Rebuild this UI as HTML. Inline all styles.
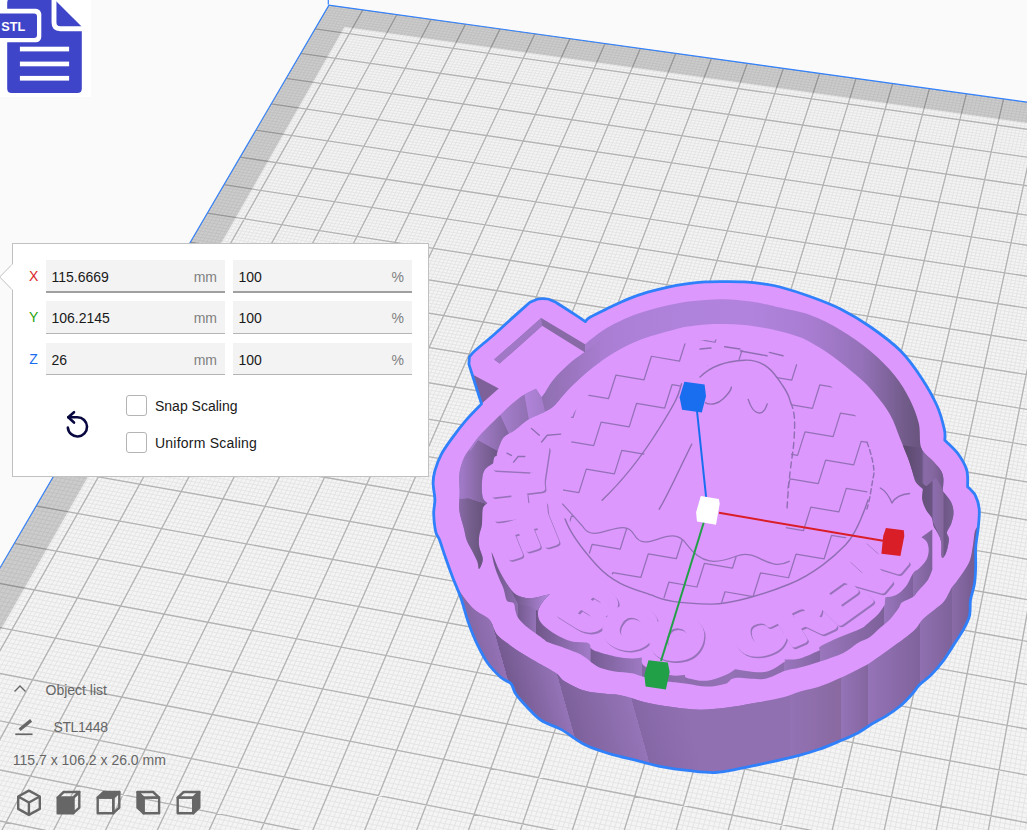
<!DOCTYPE html>
<html lang="en"><head><meta charset="utf-8"><title>Scale tool</title>
<style>
html,body{margin:0;padding:0}
body{width:1027px;height:830px;overflow:hidden;background:#fafafa;position:relative;font-family:"Liberation Sans",sans-serif;font-size:14px;color:#191919}
.scene{position:absolute;left:0;top:0;display:block}
.abs{position:absolute}
.stl{left:0;top:0;width:91px;height:97px;background:#fff;overflow:hidden}
.panel{left:12px;top:243px;width:417px;height:234px;box-sizing:border-box;background:#fff;border:1px solid #c0c1c2}
.arrow{left:0;top:263px}
.fld{height:31px;width:179px;background:#f3f3f3;border-bottom:1px solid #b4b4b4;box-sizing:content-box}
.fld span{position:absolute;top:0.5px;line-height:32px}
.fld.hov span{top:0.5px}
.fld .v{left:5.5px;color:#191919}
.fld .u{right:8px;color:#808080}
.fld.hov{height:31px;border-bottom:2px solid #a0a0a0}
.lbl{line-height:33px;left:29px;width:9px;text-align:center}
.cb{width:19px;height:19px;border:1px solid #b4b4b4;border-radius:3px;background:#fff;left:126px}
.cbl{left:155px;line-height:21px;color:#191919}
.ol{color:#666}

</style></head>
<body>
<svg class="scene" width="1027" height="830" viewBox="0 0 1027 830">
<defs><clipPath id="pc"><polygon points="328.9,5.1 1308.4,141.3 1207.0,1312.8 -247.1,990.5"/></clipPath></defs>
<polygon points="328.9,5.1 1308.4,141.3 1207.0,1312.8 -247.1,990.5" fill="#f4f4f4"/>
<g clip-path="url(#pc)">
<path d="M332.3 5.5L-242.2 991.6M335.7 6.0L-237.4 992.7M339.0 6.5L-232.6 993.8M342.4 6.9L-227.7 994.8M345.8 7.4L-222.8 995.9M349.2 7.9L-218.0 997.0M352.6 8.4L-213.1 998.1M356.0 8.8L-208.2 999.1M359.4 9.3L-203.4 1000.2M366.2 10.2L-193.6 1002.4M369.6 10.7L-188.7 1003.5M373.0 11.2L-183.9 1004.6M376.4 11.7L-179.0 1005.6M379.8 12.1L-174.1 1006.7M383.2 12.6L-169.2 1007.8M386.6 13.1L-164.3 1008.9M390.0 13.6L-159.4 1010.0M393.5 14.0L-154.5 1011.1M400.3 15.0L-144.6 1013.2M403.7 15.5L-139.7 1014.3M407.1 15.9L-134.8 1015.4M410.5 16.4L-129.9 1016.5M414.0 16.9L-124.9 1017.6M417.4 17.4L-120.0 1018.7M420.8 17.8L-115.1 1019.8M424.3 18.3L-110.1 1020.9M427.7 18.8L-105.2 1022.0M434.6 19.8L-95.3 1024.2M438.0 20.2L-90.3 1025.3M441.4 20.7L-85.3 1026.4M444.9 21.2L-80.4 1027.5M448.3 21.7L-75.4 1028.6M451.8 22.1L-70.4 1029.7M455.2 22.6L-65.5 1030.8M458.6 23.1L-60.5 1031.9M462.1 23.6L-55.5 1033.0M469.0 24.5L-45.5 1035.2M472.4 25.0L-40.5 1036.3M475.9 25.5L-35.5 1037.4M479.4 26.0L-30.5 1038.5M482.8 26.5L-25.5 1039.6M486.3 27.0L-20.5 1040.8M489.7 27.4L-15.5 1041.9M493.2 27.9L-10.5 1043.0M496.7 28.4L-5.5 1044.1M503.6 29.4L4.6 1046.3M507.1 29.8L9.6 1047.4M510.6 30.3L14.7 1048.6M514.0 30.8L19.7 1049.7M517.5 31.3L24.8 1050.8M521.0 31.8L29.8 1051.9M524.5 32.3L34.9 1053.0M527.9 32.7L39.9 1054.1M531.4 33.2L45.0 1055.3M538.4 34.2L55.1 1057.5M541.9 34.7L60.2 1058.6M545.4 35.2L65.2 1059.8M548.9 35.7L70.3 1060.9M552.4 36.1L75.4 1062.0M555.9 36.6L80.5 1063.1M559.4 37.1L85.6 1064.3M562.9 37.6L90.7 1065.4M566.4 38.1L95.8 1066.5M573.4 39.1L106.0 1068.8M576.9 39.6L111.1 1069.9M580.4 40.0L116.2 1071.1M583.9 40.5L121.3 1072.2M587.4 41.0L126.5 1073.3M590.9 41.5L131.6 1074.5M594.4 42.0L136.7 1075.6M598.0 42.5L141.9 1076.7M601.5 43.0L147.0 1077.9M608.5 44.0L157.3 1080.2M612.0 44.4L162.4 1081.3M615.6 44.9L167.6 1082.4M619.1 45.4L172.7 1083.6M622.6 45.9L177.9 1084.7M626.2 46.4L183.1 1085.9M629.7 46.9L188.2 1087.0M633.2 47.4L193.4 1088.2M636.8 47.9L198.6 1089.3M643.8 48.9L209.0 1091.6M647.4 49.4L214.2 1092.8M650.9 49.9L219.4 1093.9M654.5 50.4L224.6 1095.1M658.0 50.8L229.8 1096.2M661.6 51.3L235.0 1097.4M665.1 51.8L240.2 1098.5M668.7 52.3L245.4 1099.7M672.2 52.8L250.6 1100.8M679.4 53.8L261.1 1103.2M682.9 54.3L266.3 1104.3M686.5 54.8L271.5 1105.5M690.0 55.3L276.8 1106.6M693.6 55.8L282.0 1107.8M697.2 56.3L287.3 1109.0M700.7 56.8L292.5 1110.1M704.3 57.3L297.8 1111.3M707.9 57.8L303.0 1112.5M715.0 58.8L313.6 1114.8M718.6 59.3L318.8 1116.0M722.2 59.8L324.1 1117.1M725.8 60.3L329.4 1118.3M729.4 60.8L334.7 1119.5M733.0 61.3L340.0 1120.6M736.6 61.8L345.2 1121.8M740.1 62.3L350.5 1123.0M743.7 62.8L355.8 1124.2M750.9 63.8L366.5 1126.5M754.5 64.3L371.8 1127.7M758.1 64.8L377.1 1128.9M761.7 65.3L382.4 1130.1M765.3 65.8L387.7 1131.2M768.9 66.3L393.1 1132.4M772.5 66.8L398.4 1133.6M776.2 67.3L403.7 1134.8M779.8 67.8L409.1 1136.0M787.0 68.8L419.8 1138.3M790.6 69.3L425.1 1139.5M794.2 69.8L430.5 1140.7M797.8 70.3L435.9 1141.9M801.5 70.8L441.2 1143.1M805.1 71.3L446.6 1144.3M808.7 71.8L452.0 1145.5M812.3 72.3L457.4 1146.7M816.0 72.8L462.7 1147.9M823.2 73.8L473.5 1150.2M826.9 74.3L478.9 1151.4M830.5 74.8L484.3 1152.6M834.2 75.3L489.7 1153.8M837.8 75.9L495.1 1155.0M841.4 76.4L500.6 1156.2M845.1 76.9L506.0 1157.4M848.7 77.4L511.4 1158.6M852.4 77.9L516.8 1159.8M859.7 78.9L527.7 1162.3M863.3 79.4L533.1 1163.5M867.0 79.9L538.6 1164.7M870.6 80.4L544.0 1165.9M874.3 80.9L549.5 1167.1M878.0 81.4L555.0 1168.3M881.6 82.0L560.4 1169.5M885.3 82.5L565.9 1170.7M889.0 83.0L571.4 1171.9M896.3 84.0L582.3 1174.4M900.0 84.5L587.8 1175.6M903.7 85.0L593.3 1176.8M907.3 85.5L598.8 1178.0M911.0 86.0L604.3 1179.2M914.7 86.6L609.8 1180.4M918.4 87.1L615.3 1181.7M922.1 87.6L620.8 1182.9M925.8 88.1L626.3 1184.1M933.1 89.1L637.4 1186.6M936.8 89.6L642.9 1187.8M940.5 90.1L648.4 1189.0M944.2 90.7L654.0 1190.2M947.9 91.2L659.5 1191.5M951.6 91.7L665.0 1192.7M955.3 92.2L670.6 1193.9M959.0 92.7L676.1 1195.2M962.7 93.2L681.7 1196.4M970.1 94.3L692.8 1198.9M973.9 94.8L698.4 1200.1M977.6 95.3L704.0 1201.3M981.3 95.8L709.6 1202.6M985.0 96.3L715.2 1203.8M988.7 96.9L720.7 1205.0M992.5 97.4L726.3 1206.3M996.2 97.9L731.9 1207.5M999.9 98.4L737.5 1208.8M1007.4 99.4L748.8 1211.2M1011.1 100.0L754.4 1212.5M1014.8 100.5L760.0 1213.7M1018.6 101.0L765.6 1215.0M1022.3 101.5L771.3 1216.2M1026.0 102.0L776.9 1217.5M1029.8 102.6L782.5 1218.7M1033.5 103.1L788.2 1220.0M1037.3 103.6L793.8 1221.2M1044.8 104.6L805.2 1223.7M1048.5 105.2L810.8 1225.0M1052.3 105.7L816.5 1226.3M1056.0 106.2L822.2 1227.5M1059.8 106.7L827.8 1228.8M1063.5 107.3L833.5 1230.0M1067.3 107.8L839.2 1231.3M1071.1 108.3L844.9 1232.6M1074.8 108.8L850.6 1233.8M1082.4 109.9L862.0 1236.3M1086.1 110.4L867.7 1237.6M1089.9 110.9L873.4 1238.9M1093.7 111.5L879.2 1240.1M1097.5 112.0L884.9 1241.4M1101.2 112.5L890.6 1242.7M1105.0 113.0L896.3 1244.0M1108.8 113.6L902.1 1245.2M1112.6 114.1L907.8 1246.5M1120.2 115.1L919.3 1249.0M1124.0 115.7L925.1 1250.3M1127.8 116.2L930.8 1251.6M1131.6 116.7L936.6 1252.9M1135.4 117.2L942.4 1254.2M1139.2 117.8L948.1 1255.4M1143.0 118.3L953.9 1256.7M1146.8 118.8L959.7 1258.0M1150.6 119.4L965.5 1259.3M1158.2 120.4L977.1 1261.9M1162.0 121.0L982.9 1263.1M1165.8 121.5L988.7 1264.4M1169.6 122.0L994.5 1265.7M1173.4 122.5L1000.3 1267.0M1177.3 123.1L1006.2 1268.3M1181.1 123.6L1012.0 1269.6M1184.9 124.1L1017.8 1270.9M1188.7 124.7L1023.7 1272.2M1196.4 125.7L1035.4 1274.8M1200.2 126.3L1041.2 1276.1M1204.1 126.8L1047.1 1277.4M1207.9 127.3L1052.9 1278.7M1211.7 127.9L1058.8 1280.0M1215.6 128.4L1064.7 1281.3M1219.4 128.9L1070.5 1282.6M1223.3 129.5L1076.4 1283.9M1227.1 130.0L1082.3 1285.2M1234.8 131.1L1094.1 1287.8M1238.7 131.6L1100.0 1289.1M1242.5 132.2L1105.9 1290.4M1246.4 132.7L1111.8 1291.7M1250.2 133.2L1117.7 1293.0M1254.1 133.8L1123.6 1294.3M1258.0 134.3L1129.6 1295.6M1261.8 134.8L1135.5 1297.0M1265.7 135.4L1141.4 1298.3M1273.4 136.5L1153.3 1300.9M1277.3 137.0L1159.3 1302.2M1281.2 137.5L1165.2 1303.5M1285.1 138.1L1171.2 1304.9M1288.9 138.6L1177.2 1306.2M1292.8 139.2L1183.1 1307.5M1296.7 139.7L1189.1 1308.8M1300.6 140.2L1195.1 1310.2M1304.5 140.8L1201.1 1311.5M327.5 7.4L1308.1 144.0M326.1 9.8L1307.9 146.7M324.7 12.1L1307.7 149.4M323.4 14.5L1307.4 152.2M322.0 16.9L1307.2 154.9M320.6 19.3L1306.9 157.6M319.2 21.7L1306.7 160.4M317.8 24.1L1306.5 163.1M316.4 26.5L1306.2 165.9M313.6 31.3L1305.8 171.4M312.1 33.7L1305.5 174.2M310.7 36.1L1305.3 177.0M309.3 38.6L1305.0 179.8M307.9 41.0L1304.8 182.6M306.4 43.4L1304.5 185.4M305.0 45.9L1304.3 188.2M303.6 48.3L1304.1 191.0M302.1 50.8L1303.8 193.8M299.3 55.7L1303.3 199.5M297.8 58.2L1303.1 202.4M296.4 60.7L1302.8 205.2M294.9 63.2L1302.6 208.1M293.4 65.7L1302.3 211.0M292.0 68.2L1302.1 213.9M290.5 70.7L1301.8 216.7M289.0 73.2L1301.6 219.6M287.6 75.7L1301.3 222.5M284.6 80.8L1300.8 228.4M283.1 83.3L1300.6 231.3M281.6 85.9L1300.3 234.2M280.1 88.4L1300.1 237.2M278.7 91.0L1299.8 240.1M277.2 93.6L1299.6 243.1M275.6 96.1L1299.3 246.1M274.1 98.7L1299.0 249.0M272.6 101.3L1298.8 252.0M269.6 106.5L1298.3 258.0M268.1 109.1L1298.0 261.0M266.6 111.7L1297.7 264.0M265.0 114.3L1297.5 267.0M263.5 116.9L1297.2 270.1M262.0 119.6L1297.0 273.1M260.4 122.2L1296.7 276.2M258.9 124.9L1296.4 279.2M257.3 127.5L1296.2 282.3M254.2 132.8L1295.6 288.4M252.7 135.5L1295.4 291.5M251.1 138.2L1295.1 294.6M249.5 140.8L1294.8 297.7M247.9 143.5L1294.6 300.8M246.4 146.2L1294.3 304.0M244.8 148.9L1294.0 307.1M243.2 151.6L1293.8 310.2M241.6 154.4L1293.5 313.4M238.4 159.8L1292.9 319.7M236.8 162.6L1292.7 322.9M235.2 165.3L1292.4 326.0M233.6 168.1L1292.1 329.2M232.0 170.8L1291.8 332.4M230.4 173.6L1291.6 335.6M228.8 176.4L1291.3 338.9M227.1 179.1L1291.0 342.1M225.5 181.9L1290.7 345.3M222.2 187.5L1290.2 351.8M220.6 190.3L1289.9 355.1M219.0 193.1L1289.6 358.4M217.3 196.0L1289.3 361.6M215.7 198.8L1289.0 364.9M214.0 201.6L1288.7 368.2M212.3 204.5L1288.5 371.5M210.7 207.3L1288.2 374.9M209.0 210.2L1287.9 378.2M205.6 215.9L1287.3 384.9M203.9 218.8L1287.0 388.2M202.3 221.7L1286.7 391.6M200.6 224.6L1286.4 395.0M198.9 227.5L1286.1 398.4M197.2 230.4L1285.8 401.7M195.5 233.4L1285.5 405.1M193.7 236.3L1285.2 408.6M192.0 239.2L1285.0 412.0M188.6 245.1L1284.4 418.9M186.9 248.1L1284.1 422.3M185.1 251.0L1283.8 425.8M183.4 254.0L1283.5 429.3M181.6 257.0L1283.2 432.7M179.9 260.0L1282.9 436.2M178.1 263.0L1282.6 439.7M176.4 266.0L1282.2 443.2M174.6 269.0L1281.9 446.8M171.1 275.1L1281.3 453.8M169.3 278.1L1281.0 457.4M167.5 281.2L1280.7 461.0M165.7 284.2L1280.4 464.5M163.9 287.3L1280.1 468.1M162.1 290.4L1279.8 471.7M160.3 293.4L1279.5 475.3M158.5 296.5L1279.2 478.9M156.7 299.6L1278.8 482.6M153.1 305.8L1278.2 489.9M151.3 309.0L1277.9 493.5M149.4 312.1L1277.6 497.2M147.6 315.2L1277.3 500.9M145.8 318.4L1276.9 504.6M143.9 321.5L1276.6 508.3M142.1 324.7L1276.3 512.0M140.2 327.9L1276.0 515.7M138.3 331.1L1275.7 519.4M134.6 337.5L1275.0 527.0M132.7 340.7L1274.7 530.7M130.8 343.9L1274.4 534.5M129.0 347.1L1274.0 538.3M127.1 350.4L1273.7 542.1M125.2 353.6L1273.4 545.9M123.3 356.9L1273.0 549.7M121.4 360.1L1272.7 553.6M119.4 363.4L1272.4 557.4M115.6 370.0L1271.7 565.2M113.7 373.3L1271.4 569.1M111.7 376.6L1271.0 573.0M109.8 379.9L1270.7 576.9M107.9 383.2L1270.4 580.8M105.9 386.6L1270.0 584.7M103.9 389.9L1269.7 588.7M102.0 393.3L1269.3 592.6M100.0 396.6L1269.0 596.6M96.1 403.4L1268.3 604.6M94.1 406.8L1268.0 608.6M92.1 410.2L1267.6 612.6M90.1 413.6L1267.3 616.6M88.1 417.1L1266.9 620.7M86.1 420.5L1266.6 624.7M84.1 423.9L1266.2 628.8M82.1 427.4L1265.8 632.9M80.0 430.8L1265.5 637.0M76.0 437.8L1264.8 645.2M73.9 441.3L1264.4 649.3M71.9 444.8L1264.1 653.5M69.8 448.3L1263.7 657.7M67.8 451.8L1263.3 661.8M65.7 455.4L1263.0 666.0M63.6 458.9L1262.6 670.2M61.5 462.5L1262.3 674.4M59.5 466.0L1261.9 678.7M55.3 473.2L1261.2 687.2M53.2 476.8L1260.8 691.4M51.1 480.4L1260.4 695.7M48.9 484.0L1260.0 700.0M46.8 487.7L1259.7 704.3M44.7 491.3L1259.3 708.6M42.6 494.9L1258.9 713.0M40.4 498.6L1258.5 717.3M38.3 502.3L1258.2 721.7M34.0 509.7L1257.4 730.4M31.8 513.4L1257.0 734.9M29.6 517.1L1256.6 739.3M27.5 520.8L1256.3 743.7M25.3 524.5L1255.9 748.2M23.1 528.3L1255.5 752.6M20.9 532.0L1255.1 757.1M18.7 535.8L1254.7 761.6M16.5 539.6L1254.3 766.1M12.0 547.2L1253.5 775.2M9.8 551.0L1253.2 779.7M7.6 554.8L1252.8 784.3M5.3 558.7L1252.4 788.9M3.1 562.5L1252.0 793.5M0.8 566.4L1251.6 798.1M-1.5 570.3L1251.2 802.7M-3.7 574.2L1250.8 807.4M-6.0 578.1L1250.4 812.0M-10.6 585.9L1249.5 821.4M-12.9 589.8L1249.1 826.1M-15.2 593.8L1248.7 830.8M-17.5 597.7L1248.3 835.5M-19.8 601.7L1247.9 840.3M-22.2 605.7L1247.5 845.1M-24.5 609.7L1247.1 849.9M-26.8 613.7L1246.7 854.7M-29.2 617.7L1246.3 859.5M-33.9 625.8L1245.4 869.2M-36.3 629.8L1245.0 874.0M-38.7 633.9L1244.6 878.9M-41.0 638.0L1244.1 883.8M-43.4 642.1L1243.7 888.7M-45.8 646.2L1243.3 893.7M-48.2 650.3L1242.9 898.6M-50.7 654.5L1242.4 903.6M-53.1 658.6L1242.0 908.6M-58.0 666.9L1241.1 918.6M-60.4 671.1L1240.7 923.7M-62.9 675.3L1240.3 928.7M-65.3 679.5L1239.8 933.8M-67.8 683.8L1239.4 938.9M-70.3 688.0L1238.9 944.0M-72.8 692.3L1238.5 949.1M-75.2 696.5L1238.1 954.3M-77.8 700.8L1237.6 959.4M-82.8 709.4L1236.7 969.8M-85.3 713.7L1236.3 975.0M-87.8 718.1L1235.8 980.3M-90.4 722.4L1235.4 985.5M-92.9 726.8L1234.9 990.8M-95.5 731.2L1234.4 996.1M-98.1 735.5L1234.0 1001.4M-100.6 740.0L1233.5 1006.7M-103.2 744.4L1233.1 1012.1M-108.4 753.3L1232.1 1022.8M-111.0 757.7L1231.7 1028.2M-113.6 762.2L1231.2 1033.7M-116.3 766.7L1230.7 1039.1M-118.9 771.2L1230.2 1044.6M-121.5 775.7L1229.8 1050.1M-124.2 780.3L1229.3 1055.6M-126.8 784.8L1228.8 1061.1M-129.5 789.4L1228.3 1066.6M-134.9 798.6L1227.4 1077.8M-137.6 803.2L1226.9 1083.4M-140.3 807.8L1226.4 1089.0M-143.0 812.4L1225.9 1094.7M-145.7 817.1L1225.4 1100.3M-148.5 821.8L1224.9 1106.0M-151.2 826.5L1224.4 1111.7M-153.9 831.2L1223.9 1117.5M-156.7 835.9L1223.4 1123.2M-162.3 845.4L1222.4 1134.8M-165.0 850.2L1221.9 1140.6M-167.8 854.9L1221.4 1146.5M-170.6 859.7L1220.9 1152.3M-173.5 864.6L1220.4 1158.2M-176.3 869.4L1219.9 1164.1M-179.1 874.2L1219.4 1170.0M-182.0 879.1L1218.9 1176.0M-184.8 884.0L1218.4 1182.0M-190.6 893.8L1217.3 1194.0M-193.4 898.7L1216.8 1200.0M-196.3 903.7L1216.3 1206.1M-199.2 908.7L1215.8 1212.2M-202.1 913.6L1215.2 1218.3M-205.1 918.6L1214.7 1224.4M-208.0 923.7L1214.2 1230.6M-211.0 928.7L1213.6 1236.8M-213.9 933.8L1213.1 1243.0M-219.8 943.9L1212.0 1255.4M-222.8 949.0L1211.5 1261.7M-225.8 954.2L1210.9 1268.0M-228.8 959.3L1210.4 1274.3M-231.8 964.5L1209.8 1280.7M-234.9 969.6L1209.3 1287.1M-237.9 974.8L1208.7 1293.5M-241.0 980.1L1208.2 1299.9M-244.0 985.3L1207.6 1306.3" stroke="#e5e5e5" stroke-width="1" fill="none"/>
<path d="M328.9 5.1L-247.1 990.5M362.8 9.8L-198.5 1001.3M396.9 14.5L-149.5 1012.2M431.1 19.3L-100.2 1023.1M465.5 24.1L-50.5 1034.1M500.1 28.9L-0.4 1045.2M534.9 33.7L50.0 1056.4M569.9 38.6L100.9 1067.7M605.0 43.5L152.1 1079.0M640.3 48.4L203.8 1090.5M675.8 53.3L255.8 1102.0M711.5 58.3L308.3 1113.6M747.3 63.3L361.1 1125.3M783.4 68.3L414.4 1137.1M819.6 73.3L468.1 1149.1M856.0 78.4L522.3 1161.0M892.6 83.5L576.8 1173.1M929.4 88.6L631.8 1185.3M966.4 93.8L687.3 1197.6M1003.6 98.9L743.2 1210.0M1041.0 104.1L799.5 1222.5M1078.6 109.4L856.3 1235.1M1116.4 114.6L913.6 1247.8M1154.4 119.9L971.3 1260.6M1192.6 125.2L1029.5 1273.5M1231.0 130.5L1088.2 1286.5M1269.6 135.9L1147.4 1299.6M1308.4 141.3L1207.0 1312.8M328.9 5.1L1308.4 141.3M315.0 28.9L1306.0 168.6M300.7 53.3L1303.6 196.7M286.1 78.3L1301.1 225.5M271.1 103.9L1298.5 255.0M255.8 130.2L1295.9 285.3M240.0 157.1L1293.2 316.5M223.9 184.7L1290.4 348.6M207.3 213.1L1287.6 381.5M190.3 242.2L1284.7 415.4M172.8 272.0L1281.6 450.3M154.9 302.7L1278.5 486.2M136.5 334.3L1275.3 523.2M117.5 366.7L1272.0 561.3M98.0 400.0L1268.6 600.6M78.0 434.3L1265.1 641.1M57.4 469.6L1261.5 682.9M36.1 506.0L1257.8 726.1M14.2 543.4L1253.9 770.6M-8.3 582.0L1250.0 816.7M-31.5 621.7L1245.8 864.3M-55.5 662.8L1241.6 913.6M-80.3 705.1L1237.2 964.6M-105.8 748.8L1232.6 1017.4M-132.2 794.0L1227.9 1072.2M-159.5 840.6L1222.9 1129.0M-187.7 888.9L1217.8 1188.0M-216.9 938.8L1212.6 1249.2M-247.1 990.5L1207.0 1312.8" stroke="#b3b3b3" stroke-width="1.35" fill="none"/>
<polygon points="328.9,5.1 1308.4,141.3 1306.5,162.3 344.5,27.0 -209.7,998.8 -247.1,990.5" fill="#000" fill-opacity="0.16"/>
</g>
<path d="M-247.1 990.5 L328.9 5.1 L1308.4 141.3" transform="" stroke="#3282ff" stroke-width="1.1" fill="none"/>
<path d="M328.3 4.6L328.3 -2" stroke="#3282ff" stroke-width="1.2"/>
<defs>
<linearGradient id="gcav" gradientUnits="userSpaceOnUse" x1="585" y1="0" x2="950" y2="0">
<stop offset="0" stop-color="#a77ccf"/><stop offset="0.15" stop-color="#ae81d9"/><stop offset="0.45" stop-color="#b183dd"/><stop offset="0.62" stop-color="#a87dd1"/><stop offset="0.76" stop-color="#9471b8"/><stop offset="0.88" stop-color="#715b89"/><stop offset="0.95" stop-color="#624f76"/><stop offset="1" stop-color="#8a6aab"/>
</linearGradient>
<linearGradient id="gow" gradientUnits="userSpaceOnUse" x1="440" y1="0" x2="980" y2="0"><stop offset="0.0001" stop-color="#6f578a"/><stop offset="0.0958" stop-color="#9371b5"/><stop offset="0.0960" stop-color="#775c94"/><stop offset="0.1429" stop-color="#8e6eaf"/><stop offset="0.1431" stop-color="#8a6aab"/><stop offset="0.2186" stop-color="#9574b7"/><stop offset="0.2188" stop-color="#81649f"/><stop offset="0.3399" stop-color="#9574b7"/><stop offset="0.3401" stop-color="#8768a7"/><stop offset="0.4306" stop-color="#9070b1"/><stop offset="0.4308" stop-color="#9070b1"/><stop offset="0.6480" stop-color="#9070b1"/><stop offset="0.6482" stop-color="#9372b5"/><stop offset="0.7432" stop-color="#89699f"/><stop offset="0.7434" stop-color="#9573b7"/><stop offset="0.7932" stop-color="#84669f"/><stop offset="0.7934" stop-color="#9573b7"/><stop offset="0.8895" stop-color="#80639c"/><stop offset="0.8897" stop-color="#9070b0"/><stop offset="0.9484" stop-color="#7e629a"/><stop offset="0.9486" stop-color="#8a6ba8"/><stop offset="0.9999" stop-color="#70588a"/></linearGradient>
<linearGradient id="gowl" gradientTransform="matrix(1 0 0.28 1 -179.2 0)" gradientUnits="userSpaceOnUse" x1="420" y1="0" x2="700" y2="0"><stop offset="0.0001" stop-color="#69537f"/><stop offset="0.2742" stop-color="#9371b5"/><stop offset="0.2744" stop-color="#745a90"/><stop offset="0.4553" stop-color="#9573b7"/><stop offset="0.4555" stop-color="#7d619b"/><stop offset="0.6963" stop-color="#9574b7"/><stop offset="0.6965" stop-color="#8667a6"/><stop offset="0.8856" stop-color="#9070b1"/><stop offset="0.8858" stop-color="#9070b1"/><stop offset="0.9999" stop-color="#9070b1"/></linearGradient>
<clipPath id="cowl"><rect x="420" y="560" width="340" height="230"/></clipPath>
<linearGradient id="gpl" gradientUnits="userSpaceOnUse" x1="490" y1="0" x2="945" y2="0"><stop offset="0.0001" stop-color="#6a5385"/><stop offset="0.0608" stop-color="#8e6eae"/><stop offset="0.0610" stop-color="#735a8f"/><stop offset="0.1010" stop-color="#9572b8"/><stop offset="0.1012" stop-color="#6f5789"/><stop offset="0.2208" stop-color="#a27bc8"/><stop offset="0.2210" stop-color="#765c93"/><stop offset="0.3335" stop-color="#9d79c2"/><stop offset="0.3337" stop-color="#8565a4"/><stop offset="0.4287" stop-color="#9070b1"/><stop offset="0.4289" stop-color="#8d6dae"/><stop offset="0.5388" stop-color="#9472b6"/><stop offset="0.5390" stop-color="#9270b4"/><stop offset="0.6469" stop-color="#8c6cad"/><stop offset="0.6471" stop-color="#9a76bd"/><stop offset="0.7256" stop-color="#8466a3"/><stop offset="0.7258" stop-color="#9a76bd"/><stop offset="0.8654" stop-color="#7d6199"/><stop offset="0.8656" stop-color="#9a76bd"/><stop offset="0.9296" stop-color="#7e629d"/><stop offset="0.9298" stop-color="#9070b0"/><stop offset="0.9999" stop-color="#70588b"/></linearGradient>
<clipPath id="ccav"><path d="M479.1 568.9C478.2 569.2 478.5 564.4 477.2 561.2C475.9 558.0 473.2 553.1 471.4 549.6C469.6 546.1 467.9 543.5 466.6 540.0C465.4 536.5 465.1 533.3 463.9 528.4C462.7 523.5 460.0 516.4 459.3 510.4C458.6 504.4 459.7 498.3 459.7 492.3C459.7 486.3 458.6 479.9 459.3 474.2C460.0 468.5 461.8 462.7 463.9 458.0C466.0 453.3 469.3 449.8 472.0 446.0C474.7 442.2 475.5 440.3 480.0 435.3C484.5 430.3 493.8 421.3 499.0 416.2C504.2 411.1 507.2 408.0 511.3 404.5C515.4 401.0 519.6 397.6 523.7 395.0C527.8 392.4 534.0 389.8 536.0 388.7L541.6 397.2C542.2 396.4 543.0 395.7 545.0 392.7C547.0 389.7 549.8 384.1 553.9 379.3C558.0 374.5 564.4 368.2 569.6 363.6C574.8 359.0 582.5 353.8 585.1 351.8L585.1 344.2C586.4 343.1 588.7 340.8 592.7 337.9C596.7 334.9 603.3 329.9 609.3 326.5C615.3 323.1 622.1 319.9 628.5 317.2C634.9 314.5 641.4 312.4 647.8 310.5C654.2 308.6 660.7 307.1 667.1 305.6C673.5 304.2 679.9 302.8 686.3 301.8C692.7 300.9 699.2 300.3 705.6 299.9C712.0 299.5 718.5 299.1 724.9 299.3C731.3 299.5 737.7 300.1 744.1 300.8C750.5 301.5 757.4 302.6 763.4 303.7C769.4 304.8 772.2 305.7 780.0 307.6C787.8 309.5 799.9 311.3 810.0 315.0C820.1 318.7 830.4 323.9 840.5 330.0C850.6 336.1 861.6 343.7 870.6 351.3C879.6 358.9 888.2 367.4 894.7 375.4C901.2 383.4 905.8 391.5 909.8 399.5C913.8 407.5 916.9 415.6 918.8 423.6C920.7 431.6 919.0 441.6 921.2 447.7C923.4 453.8 928.6 456.4 931.8 460.0C935.0 463.6 938.3 466.6 940.2 469.6C942.1 472.6 942.9 474.5 943.3 478.1C943.7 481.7 942.8 489.1 942.7 491.3C944.1 493.1 949.3 498.6 951.1 502.2C952.9 505.8 953.5 509.4 953.5 513.0C953.5 516.6 952.2 520.7 951.1 523.9C950.0 527.1 947.3 529.7 946.9 532.3C946.5 534.9 949.0 536.3 948.9 539.5C948.8 542.7 947.5 548.6 946.5 551.6C945.5 554.6 944.0 557.1 943.1 557.7C942.2 558.3 941.7 557.8 941.4 555.2C941.1 552.6 941.8 545.5 941.2 541.9C940.6 538.3 939.1 536.1 937.8 533.5C936.5 530.9 934.6 528.9 933.6 526.3C932.6 523.7 933.0 520.4 931.8 517.8C930.6 515.2 928.0 513.6 926.4 510.6C924.8 507.6 922.8 503.4 922.2 499.8C921.6 496.2 922.7 490.7 922.8 488.9C921.6 487.7 917.2 484.5 915.5 481.7C913.8 478.9 913.8 476.0 912.5 472.0C911.2 468.0 909.9 463.1 907.9 457.8C905.9 452.5 902.3 444.1 900.7 440.0C899.1 435.9 899.4 436.7 898.1 433.4C896.8 430.1 894.8 424.3 892.8 420.1C890.8 415.9 888.8 412.2 886.1 408.2C883.5 404.2 880.2 400.3 876.9 396.3C873.6 392.3 870.3 388.3 866.3 384.3C862.3 380.3 857.4 376.1 853.0 372.4C848.6 368.6 844.2 365.2 839.8 361.8C835.4 358.4 830.9 354.9 826.5 351.9C822.1 348.9 817.7 346.3 813.3 343.9C808.9 341.5 805.5 339.4 800.0 337.3C794.5 335.2 786.1 332.9 780.0 331.3C773.9 329.7 769.4 328.9 763.4 327.8C757.4 326.7 750.5 325.5 744.1 324.9C737.7 324.3 731.3 324.1 724.9 324.0C718.5 323.9 712.0 324.0 705.6 324.5C699.2 325.0 691.4 326.0 686.3 326.8C681.2 327.6 680.0 328.1 674.8 329.5C669.6 330.9 661.3 333.1 655.0 335.0C648.7 336.9 643.6 338.3 636.8 341.2C630.0 344.1 621.9 347.9 614.4 352.4C606.9 356.9 599.5 362.1 592.0 368.1C584.5 374.1 576.0 381.9 569.6 388.2C563.2 394.5 558.0 402.2 553.9 406.1C549.8 410.0 547.6 410.3 545.0 411.7C542.4 413.1 541.2 413.4 538.4 414.7C535.6 416.0 532.1 417.1 528.2 419.6C524.3 422.2 519.1 427.0 515.0 430.0C510.9 433.0 506.4 433.8 503.5 437.5C500.6 441.2 498.6 448.1 497.3 452.0C496.0 455.9 497.6 458.0 495.5 461.0C493.4 464.0 486.9 466.3 484.6 470.0C482.3 473.7 482.2 478.7 481.9 483.3C481.6 487.9 481.9 494.4 482.8 497.7C483.7 501.0 486.6 502.2 487.4 503.1C486.6 504.0 483.7 505.0 482.8 508.6C481.9 512.2 482.5 520.3 481.9 524.8C481.3 529.3 479.6 532.1 479.2 535.7C478.8 539.3 478.6 542.6 479.2 546.5C479.8 550.4 482.8 555.5 482.8 559.2C482.8 562.9 480.0 568.6 479.1 568.9Z"/></clipPath>
</defs>
<path d="M590.0 317.2C594.0 314.9 602.9 310.7 609.3 307.6C615.7 304.6 622.1 301.5 628.5 298.9C634.9 296.3 641.4 294.1 647.8 292.2C654.2 290.3 660.7 288.7 667.1 287.3C673.5 285.9 679.9 284.8 686.3 283.9C692.7 283.0 699.2 282.3 705.6 281.9C712.0 281.5 718.5 281.6 724.9 281.6C731.3 281.6 737.7 281.5 744.1 281.9C750.5 282.3 757.4 283.0 763.4 283.9C769.4 284.8 772.2 284.9 780.0 287.0C787.8 289.1 799.9 292.8 810.0 296.5C820.1 300.2 830.4 303.9 840.5 309.0C850.6 314.1 860.6 320.0 870.6 327.0C880.6 334.0 892.2 342.4 900.7 351.0C909.2 359.6 915.8 369.3 921.8 378.4C927.8 387.5 933.1 397.0 936.9 405.5C940.7 414.0 943.1 423.8 944.4 429.6C945.7 435.4 944.7 438.4 944.8 440.2C947.0 442.4 954.4 448.7 958.0 453.7C961.6 458.7 965.1 464.5 966.7 470.0C968.3 475.5 967.5 483.9 967.6 486.7C968.9 488.1 973.4 491.7 975.3 495.4C977.2 499.1 978.7 503.4 979.2 508.9C979.7 514.4 978.8 521.8 978.2 528.2C977.6 534.6 976.1 541.0 975.7 547.4C975.3 553.8 975.9 560.6 975.7 566.7C975.5 572.8 975.3 578.5 974.4 584.0C973.5 589.5 971.3 594.8 970.5 600.0C969.7 605.2 970.7 610.6 969.6 615.4C968.5 620.2 966.4 624.1 963.8 628.9C961.2 633.7 957.6 638.8 954.1 644.3C950.6 649.8 946.5 656.6 942.6 661.7C938.8 666.8 934.9 671.2 931.0 675.1C927.1 679.0 922.7 681.6 919.5 684.8C916.3 688.0 915.0 690.9 911.8 694.4C908.6 697.9 904.4 702.5 900.2 706.0C896.0 709.5 891.5 712.6 886.7 715.6C881.9 718.6 876.1 721.4 871.3 724.3C866.5 727.2 863.3 730.0 857.8 732.9C852.3 735.8 844.9 738.9 838.5 741.6C832.1 744.3 825.7 747.0 819.3 749.3C812.9 751.5 808.6 752.9 800.0 755.1C791.4 757.3 777.2 760.6 767.8 762.7C758.3 764.8 752.0 766.3 743.3 767.9C734.5 769.5 724.6 772.1 715.3 772.5C705.9 772.9 696.0 771.3 687.2 770.4C678.4 769.5 670.9 768.5 662.7 766.9C654.5 765.3 646.9 763.1 638.1 760.9C629.3 758.7 618.9 756.5 610.1 753.9C601.4 751.3 593.8 749.2 585.6 745.1C577.4 741.0 568.5 733.6 561.0 729.4C553.5 725.2 547.2 724.8 540.5 719.9C533.8 715.0 524.9 704.6 520.6 700.0C516.3 695.4 516.4 695.0 514.8 692.2C513.2 689.5 513.1 685.9 510.9 683.5C508.6 681.1 505.1 681.2 501.3 677.8C497.5 674.4 492.0 669.2 487.8 663.3C483.6 657.3 479.4 648.8 476.2 642.1C473.0 635.4 471.1 630.3 468.5 622.9C465.9 615.5 463.4 605.2 460.8 597.8C458.2 590.4 455.7 585.2 453.1 578.5C450.5 571.8 447.6 563.7 445.4 557.3C443.1 550.9 441.2 544.2 439.6 540.0C438.0 535.8 436.8 536.3 435.8 532.0C434.8 527.7 433.9 519.4 433.7 514.0C433.5 508.6 435.0 504.6 434.9 499.5C434.8 494.4 433.1 488.1 433.1 483.3C433.1 478.5 433.5 475.4 434.9 470.6C436.3 465.8 438.4 459.7 441.3 454.3C444.2 448.9 448.0 443.8 452.1 438.1C456.2 432.4 461.2 425.8 466.1 420.1C471.0 414.4 478.9 406.6 481.5 403.9C480.4 400.6 477.3 390.6 475.2 384.0C473.1 377.4 469.9 367.4 468.9 364.1L469.4 356.9C470.4 355.8 471.2 354.1 475.2 350.5C479.2 346.9 487.3 340.5 493.3 335.2C499.3 329.9 505.3 324.3 511.3 318.9C517.3 313.5 526.4 305.4 529.4 302.7C530.9 302.1 535.4 299.6 538.4 299.0C541.4 298.4 544.5 298.4 547.5 299.0C550.5 299.6 555.0 302.1 556.5 302.7C559.5 304.6 569.8 311.2 574.6 314.4C579.4 317.5 583.6 320.4 585.4 321.6C586.2 320.9 586.0 319.5 590.0 317.2Z" fill="#dc98fd"/>
<path d="M453.1 578.5C453.4 579.3 453.4 580.5 455.0 583.4C456.6 586.3 459.6 591.6 462.8 595.9C466.0 600.2 470.1 605.7 474.3 609.4C478.5 613.1 484.9 615.7 487.8 618.0C490.7 620.3 491.1 622.2 491.7 623.0C492.6 624.9 494.3 631.1 496.9 634.4C499.5 637.7 503.2 640.0 507.1 643.0C511.1 646.0 516.1 649.6 520.6 652.5C525.1 655.4 529.2 657.7 534.0 660.5C538.8 663.3 545.6 667.0 549.5 669.3C553.4 671.5 554.6 672.0 557.2 674.0C559.8 676.0 560.4 678.8 564.9 681.5C569.4 684.2 577.7 688.5 584.1 690.5C590.5 692.5 597.1 692.7 603.4 693.5C609.6 694.3 614.1 693.9 621.6 695.5C629.1 697.1 639.2 701.0 648.5 703.0C657.8 705.0 668.7 706.7 677.4 707.8C686.1 708.9 692.6 709.7 700.6 709.7C708.6 709.7 716.6 708.9 725.6 707.8C734.6 706.7 744.9 704.8 754.5 703.0C764.1 701.2 775.8 699.1 783.4 697.2C791.0 695.3 794.7 693.1 800.0 691.5C805.3 689.9 810.6 689.1 815.4 687.7C820.2 686.3 824.4 684.7 828.9 682.9C833.4 681.1 837.6 679.4 842.4 677.1C847.2 674.9 853.6 671.5 857.8 669.4C862.0 667.3 864.2 666.4 867.4 664.5C870.6 662.6 873.2 660.5 877.1 657.8C881.0 655.1 886.1 651.4 890.6 648.2C895.1 645.0 899.9 641.8 904.0 638.6C908.1 635.4 912.3 632.2 915.4 629.0C918.5 625.8 919.5 622.5 922.7 619.2C925.9 616.0 931.1 612.5 934.7 609.5C938.3 606.5 941.5 604.7 944.3 601.1C947.1 597.5 949.6 591.0 951.6 587.8C953.6 584.6 954.2 584.8 956.4 581.8C958.6 578.8 962.5 573.4 964.8 569.8C967.1 566.2 968.6 564.2 970.0 560.1C971.4 556.0 972.2 549.9 973.0 545.0C973.8 540.1 974.1 533.8 975.0 531.0C975.9 528.2 978.1 525.5 978.2 528.2C978.3 530.9 976.1 541.0 975.7 547.4C975.3 553.8 975.9 560.6 975.7 566.7C975.5 572.8 975.3 578.5 974.4 584.0C973.5 589.5 971.3 594.8 970.5 600.0C969.7 605.2 970.7 610.6 969.6 615.4C968.5 620.2 966.4 624.1 963.8 628.9C961.2 633.7 957.6 638.8 954.1 644.3C950.6 649.8 946.5 656.6 942.6 661.7C938.8 666.8 934.9 671.2 931.0 675.1C927.1 679.0 922.7 681.6 919.5 684.8C916.3 688.0 915.0 690.9 911.8 694.4C908.6 697.9 904.4 702.5 900.2 706.0C896.0 709.5 891.5 712.6 886.7 715.6C881.9 718.6 876.1 721.4 871.3 724.3C866.5 727.2 863.3 730.0 857.8 732.9C852.3 735.8 844.9 738.9 838.5 741.6C832.1 744.3 825.7 747.0 819.3 749.3C812.9 751.5 808.6 752.9 800.0 755.1C791.4 757.3 777.2 760.6 767.8 762.7C758.3 764.8 752.0 766.3 743.3 767.9C734.5 769.5 724.6 772.1 715.3 772.5C705.9 772.9 696.0 771.3 687.2 770.4C678.4 769.5 670.9 768.5 662.7 766.9C654.5 765.3 646.9 763.1 638.1 760.9C629.3 758.7 618.9 756.5 610.1 753.9C601.4 751.3 593.8 749.2 585.6 745.1C577.4 741.0 568.5 733.6 561.0 729.4C553.5 725.2 547.2 724.8 540.5 719.9C533.8 715.0 524.9 704.6 520.6 700.0C516.3 695.4 516.4 695.0 514.8 692.2C513.2 689.5 513.1 685.9 510.9 683.5C508.6 681.1 505.1 681.2 501.3 677.8C497.5 674.4 492.0 669.2 487.8 663.3C483.6 657.3 479.4 648.8 476.2 642.1C473.0 635.4 471.1 630.3 468.5 622.9C465.9 615.5 463.4 605.2 460.8 597.8C458.2 590.4 454.4 581.7 453.1 578.5C451.8 575.3 452.8 577.7 453.1 578.5Z" fill="url(#gow)"/>
<path d="M453.1 578.5C453.4 579.3 453.4 580.5 455.0 583.4C456.6 586.3 459.6 591.6 462.8 595.9C466.0 600.2 470.1 605.7 474.3 609.4C478.5 613.1 484.9 615.7 487.8 618.0C490.7 620.3 491.1 622.2 491.7 623.0C492.6 624.9 494.3 631.1 496.9 634.4C499.5 637.7 503.2 640.0 507.1 643.0C511.1 646.0 516.1 649.6 520.6 652.5C525.1 655.4 529.2 657.7 534.0 660.5C538.8 663.3 545.6 667.0 549.5 669.3C553.4 671.5 554.6 672.0 557.2 674.0C559.8 676.0 560.4 678.8 564.9 681.5C569.4 684.2 577.7 688.5 584.1 690.5C590.5 692.5 597.1 692.7 603.4 693.5C609.6 694.3 614.1 693.9 621.6 695.5C629.1 697.1 639.2 701.0 648.5 703.0C657.8 705.0 668.7 706.7 677.4 707.8C686.1 708.9 692.6 709.7 700.6 709.7C708.6 709.7 716.6 708.9 725.6 707.8C734.6 706.7 744.9 704.8 754.5 703.0C764.1 701.2 775.8 699.1 783.4 697.2C791.0 695.3 794.7 693.1 800.0 691.5C805.3 689.9 810.6 689.1 815.4 687.7C820.2 686.3 824.4 684.7 828.9 682.9C833.4 681.1 837.6 679.4 842.4 677.1C847.2 674.9 853.6 671.5 857.8 669.4C862.0 667.3 864.2 666.4 867.4 664.5C870.6 662.6 873.2 660.5 877.1 657.8C881.0 655.1 886.1 651.4 890.6 648.2C895.1 645.0 899.9 641.8 904.0 638.6C908.1 635.4 912.3 632.2 915.4 629.0C918.5 625.8 919.5 622.5 922.7 619.2C925.9 616.0 931.1 612.5 934.7 609.5C938.3 606.5 941.5 604.7 944.3 601.1C947.1 597.5 949.6 591.0 951.6 587.8C953.6 584.6 954.2 584.8 956.4 581.8C958.6 578.8 962.5 573.4 964.8 569.8C967.1 566.2 968.6 564.2 970.0 560.1C971.4 556.0 972.2 549.9 973.0 545.0C973.8 540.1 974.1 533.8 975.0 531.0C975.9 528.2 978.1 525.5 978.2 528.2C978.3 530.9 976.1 541.0 975.7 547.4C975.3 553.8 975.9 560.6 975.7 566.7C975.5 572.8 975.3 578.5 974.4 584.0C973.5 589.5 971.3 594.8 970.5 600.0C969.7 605.2 970.7 610.6 969.6 615.4C968.5 620.2 966.4 624.1 963.8 628.9C961.2 633.7 957.6 638.8 954.1 644.3C950.6 649.8 946.5 656.6 942.6 661.7C938.8 666.8 934.9 671.2 931.0 675.1C927.1 679.0 922.7 681.6 919.5 684.8C916.3 688.0 915.0 690.9 911.8 694.4C908.6 697.9 904.4 702.5 900.2 706.0C896.0 709.5 891.5 712.6 886.7 715.6C881.9 718.6 876.1 721.4 871.3 724.3C866.5 727.2 863.3 730.0 857.8 732.9C852.3 735.8 844.9 738.9 838.5 741.6C832.1 744.3 825.7 747.0 819.3 749.3C812.9 751.5 808.6 752.9 800.0 755.1C791.4 757.3 777.2 760.6 767.8 762.7C758.3 764.8 752.0 766.3 743.3 767.9C734.5 769.5 724.6 772.1 715.3 772.5C705.9 772.9 696.0 771.3 687.2 770.4C678.4 769.5 670.9 768.5 662.7 766.9C654.5 765.3 646.9 763.1 638.1 760.9C629.3 758.7 618.9 756.5 610.1 753.9C601.4 751.3 593.8 749.2 585.6 745.1C577.4 741.0 568.5 733.6 561.0 729.4C553.5 725.2 547.2 724.8 540.5 719.9C533.8 715.0 524.9 704.6 520.6 700.0C516.3 695.4 516.4 695.0 514.8 692.2C513.2 689.5 513.1 685.9 510.9 683.5C508.6 681.1 505.1 681.2 501.3 677.8C497.5 674.4 492.0 669.2 487.8 663.3C483.6 657.3 479.4 648.8 476.2 642.1C473.0 635.4 471.1 630.3 468.5 622.9C465.9 615.5 463.4 605.2 460.8 597.8C458.2 590.4 454.4 581.7 453.1 578.5C451.8 575.3 452.8 577.7 453.1 578.5Z" fill="url(#gowl)" clip-path="url(#cowl)"/>
<path d="M479.1 568.9C478.2 569.2 478.5 564.4 477.2 561.2C475.9 558.0 473.2 553.1 471.4 549.6C469.6 546.1 467.9 543.5 466.6 540.0C465.4 536.5 465.1 533.3 463.9 528.4C462.7 523.5 460.0 516.4 459.3 510.4C458.6 504.4 459.7 498.3 459.7 492.3C459.7 486.3 458.6 479.9 459.3 474.2C460.0 468.5 461.8 462.7 463.9 458.0C466.0 453.3 469.3 449.8 472.0 446.0C474.7 442.2 475.5 440.3 480.0 435.3C484.5 430.3 493.8 421.3 499.0 416.2C504.2 411.1 507.2 408.0 511.3 404.5C515.4 401.0 519.6 397.6 523.7 395.0C527.8 392.4 534.0 389.8 536.0 388.7L541.6 397.2C542.2 396.4 543.0 395.7 545.0 392.7C547.0 389.7 549.8 384.1 553.9 379.3C558.0 374.5 564.4 368.2 569.6 363.6C574.8 359.0 582.5 353.8 585.1 351.8L585.1 344.2C586.4 343.1 588.7 340.8 592.7 337.9C596.7 334.9 603.3 329.9 609.3 326.5C615.3 323.1 622.1 319.9 628.5 317.2C634.9 314.5 641.4 312.4 647.8 310.5C654.2 308.6 660.7 307.1 667.1 305.6C673.5 304.2 679.9 302.8 686.3 301.8C692.7 300.9 699.2 300.3 705.6 299.9C712.0 299.5 718.5 299.1 724.9 299.3C731.3 299.5 737.7 300.1 744.1 300.8C750.5 301.5 757.4 302.6 763.4 303.7C769.4 304.8 772.2 305.7 780.0 307.6C787.8 309.5 799.9 311.3 810.0 315.0C820.1 318.7 830.4 323.9 840.5 330.0C850.6 336.1 861.6 343.7 870.6 351.3C879.6 358.9 888.2 367.4 894.7 375.4C901.2 383.4 905.8 391.5 909.8 399.5C913.8 407.5 916.9 415.6 918.8 423.6C920.7 431.6 919.0 441.6 921.2 447.7C923.4 453.8 928.6 456.4 931.8 460.0C935.0 463.6 938.3 466.6 940.2 469.6C942.1 472.6 942.9 474.5 943.3 478.1C943.7 481.7 942.8 489.1 942.7 491.3C944.1 493.1 949.3 498.6 951.1 502.2C952.9 505.8 953.5 509.4 953.5 513.0C953.5 516.6 952.2 520.7 951.1 523.9C950.0 527.1 947.3 529.7 946.9 532.3C946.5 534.9 949.0 536.3 948.9 539.5C948.8 542.7 947.5 548.6 946.5 551.6C945.5 554.6 944.0 557.1 943.1 557.7C942.2 558.3 941.7 557.8 941.4 555.2C941.1 552.6 941.8 545.5 941.2 541.9C940.6 538.3 939.1 536.1 937.8 533.5C936.5 530.9 934.6 528.9 933.6 526.3C932.6 523.7 933.0 520.4 931.8 517.8C930.6 515.2 928.0 513.6 926.4 510.6C924.8 507.6 922.8 503.4 922.2 499.8C921.6 496.2 922.7 490.7 922.8 488.9C921.6 487.7 917.2 484.5 915.5 481.7C913.8 478.9 913.8 476.0 912.5 472.0C911.2 468.0 909.9 463.1 907.9 457.8C905.9 452.5 902.3 444.1 900.7 440.0C899.1 435.9 899.4 436.7 898.1 433.4C896.8 430.1 894.8 424.3 892.8 420.1C890.8 415.9 888.8 412.2 886.1 408.2C883.5 404.2 880.2 400.3 876.9 396.3C873.6 392.3 870.3 388.3 866.3 384.3C862.3 380.3 857.4 376.1 853.0 372.4C848.6 368.6 844.2 365.2 839.8 361.8C835.4 358.4 830.9 354.9 826.5 351.9C822.1 348.9 817.7 346.3 813.3 343.9C808.9 341.5 805.5 339.4 800.0 337.3C794.5 335.2 786.1 332.9 780.0 331.3C773.9 329.7 769.4 328.9 763.4 327.8C757.4 326.7 750.5 325.5 744.1 324.9C737.7 324.3 731.3 324.1 724.9 324.0C718.5 323.9 712.0 324.0 705.6 324.5C699.2 325.0 691.4 326.0 686.3 326.8C681.2 327.6 680.0 328.1 674.8 329.5C669.6 330.9 661.3 333.1 655.0 335.0C648.7 336.9 643.6 338.3 636.8 341.2C630.0 344.1 621.9 347.9 614.4 352.4C606.9 356.9 599.5 362.1 592.0 368.1C584.5 374.1 576.0 381.9 569.6 388.2C563.2 394.5 558.0 402.2 553.9 406.1C549.8 410.0 547.6 410.3 545.0 411.7C542.4 413.1 541.2 413.4 538.4 414.7C535.6 416.0 532.1 417.1 528.2 419.6C524.3 422.2 519.1 427.0 515.0 430.0C510.9 433.0 506.4 433.8 503.5 437.5C500.6 441.2 498.6 448.1 497.3 452.0C496.0 455.9 497.6 458.0 495.5 461.0C493.4 464.0 486.9 466.3 484.6 470.0C482.3 473.7 482.2 478.7 481.9 483.3C481.6 487.9 481.9 494.4 482.8 497.7C483.7 501.0 486.6 502.2 487.4 503.1C486.6 504.0 483.7 505.0 482.8 508.6C481.9 512.2 482.5 520.3 481.9 524.8C481.3 529.3 479.6 532.1 479.2 535.7C478.8 539.3 478.6 542.6 479.2 546.5C479.8 550.4 482.8 555.5 482.8 559.2C482.8 562.9 480.0 568.6 479.1 568.9Z" fill="url(#gcav)"/>
<g clip-path="url(#ccav)">
<defs>
<linearGradient id="s1" gradientUnits="userSpaceOnUse" x1="458" y1="0" x2="490" y2="0"><stop offset="0" stop-color="#8a6aa9"/><stop offset="0.35" stop-color="#77608f"/><stop offset="1" stop-color="#5f4d73"/></linearGradient>
<linearGradient id="s2" gradientUnits="userSpaceOnUse" x1="462" y1="0" x2="500" y2="0"><stop offset="0" stop-color="#a079c6"/><stop offset="0.5" stop-color="#83669f"/><stop offset="1" stop-color="#6a5583"/></linearGradient>
<linearGradient id="s3" gradientUnits="userSpaceOnUse" x1="478" y1="0" x2="512" y2="0"><stop offset="0" stop-color="#a57dcc"/><stop offset="1" stop-color="#7d6399"/></linearGradient>
<linearGradient id="s4" gradientUnits="userSpaceOnUse" x1="498" y1="0" x2="530" y2="0"><stop offset="0" stop-color="#a980d1"/><stop offset="1" stop-color="#8f6fb0"/></linearGradient>
<linearGradient id="s5" gradientUnits="userSpaceOnUse" x1="522" y1="0" x2="546" y2="0"><stop offset="0" stop-color="#b385dd"/><stop offset="1" stop-color="#a27bc8"/></linearGradient>
<linearGradient id="s6" gradientUnits="userSpaceOnUse" x1="541" y1="0" x2="600" y2="0"><stop offset="0" stop-color="#8f6fb0"/><stop offset="1" stop-color="#a77ccf"/></linearGradient>
</defs>
<path d="M450.0 575.0L450.0 500.0L468.0 498.0L490.0 505.0L490.0 575.0Z" fill="url(#s1)"/>
<path d="M450.0 500.0L450.0 455.0L478.0 440.0L500.0 452.0L500.0 470.0L490.0 505.0L468.0 498.0Z" fill="url(#s2)"/>
<path d="M470.0 452.0L470.0 425.0L499.0 412.0L512.0 440.0L500.0 470.0L500.0 452.0L478.0 440.0Z" fill="url(#s3)"/>
<path d="M499.0 412.0L499.0 390.0L523.7 390.0L530.0 425.0L512.0 440.0Z" fill="url(#s4)"/>
<path d="M523.7 390.0L523.7 380.0L541.6 385.0L546.0 415.0L530.0 425.0Z" fill="url(#s5)"/>
<path d="M541.6 397.2L545.0 380.0L600.0 340.0L600.0 380.0L546.0 415.0Z" fill="url(#s6)"/>
<defs>
<linearGradient id="r1" gradientUnits="userSpaceOnUse" x1="906" y1="0" x2="945" y2="0"><stop offset="0" stop-color="#5d4b70"/><stop offset="0.4" stop-color="#6a5583"/><stop offset="0.46" stop-color="#8a6ba8"/><stop offset="0.72" stop-color="#84669f"/><stop offset="1" stop-color="#6f5888"/></linearGradient>
<linearGradient id="r2" gradientUnits="userSpaceOnUse" x1="922" y1="0" x2="954" y2="0"><stop offset="0" stop-color="#64507a"/><stop offset="0.3" stop-color="#6a5583"/><stop offset="0.36" stop-color="#8c6cad"/><stop offset="0.64" stop-color="#86689f"/><stop offset="0.7" stop-color="#6f5888"/><stop offset="1" stop-color="#77618f"/></linearGradient>
</defs>
<path d="M900.0 445.0L921.2 447.7L945.0 470.0L945.0 500.0L915.0 478.0L900.0 455.0Z" fill="url(#r1)"/>
<path d="M923.0 489.0L936.0 478.0L944.5 491.6L955.0 503.0L955.0 560.0L940.0 560.0L940.0 537.0L923.3 501.2Z" fill="url(#r2)"/>
</g>
<path d="M491.8 552.6C492.5 553.2 496.0 563.5 498.5 568.7C501.0 573.9 504.0 579.4 507.0 583.8C510.0 588.1 512.4 592.4 516.3 594.8C520.2 597.2 525.0 598.3 530.6 598.2C536.2 598.1 546.8 594.7 550.0 594.0C548.7 595.4 544.4 599.6 542.4 602.4C540.4 605.2 538.8 608.0 538.2 610.8C537.6 613.6 538.0 616.8 539.0 619.3C540.0 621.8 541.3 623.5 544.1 626.0C546.9 628.5 551.4 631.9 555.9 634.4C560.4 636.9 565.8 639.8 571.1 641.2C576.4 642.6 584.7 641.8 587.9 642.9C591.1 644.0 590.1 647.1 590.5 647.9C591.5 648.5 592.3 649.9 596.4 651.3C600.5 652.7 609.0 655.2 614.9 656.4C620.8 657.6 627.3 658.3 631.8 658.5C636.3 658.7 640.1 657.8 641.8 657.6C642.3 659.0 640.1 663.4 644.7 666.3C649.4 669.2 663.0 673.5 669.7 675.0C676.4 676.5 682.5 675.0 685.1 675.0C685.4 675.5 683.6 676.9 687.1 677.9C690.6 678.9 699.9 681.3 706.3 680.8C712.7 680.3 720.8 676.9 725.6 675.0C730.4 673.1 733.6 670.2 735.2 669.2C740.0 669.7 756.2 673.2 764.2 672.1C772.2 671.0 780.0 664.6 783.4 662.5C786.8 660.4 784.2 660.1 784.4 659.6C787.0 659.4 794.0 660.1 800.0 658.5C806.0 656.9 816.8 651.5 820.2 650.1C820.3 649.4 817.5 648.2 821.0 646.0C824.5 643.8 834.9 639.4 841.4 636.6C847.9 633.8 855.7 631.1 860.0 629.0C864.3 626.9 864.2 626.5 867.2 624.0C870.2 621.5 875.2 617.5 878.1 614.3C881.0 611.1 883.6 606.3 884.7 604.7L885.3 597.5C887.1 597.1 892.7 596.9 896.1 595.1C899.5 593.3 903.0 590.2 905.8 586.6C908.6 583.0 910.8 576.4 913.0 573.4C915.2 570.4 916.8 570.8 919.0 568.6C921.2 566.4 924.7 563.1 926.3 560.1C927.9 557.1 928.6 553.5 928.7 550.5C928.8 547.5 928.1 544.2 926.9 542.0C925.7 539.8 922.3 538.0 921.4 537.2L932.3 529.5L932.3 569.8C931.5 571.6 929.9 577.0 927.5 580.6C925.1 584.2 920.2 588.7 917.8 591.4C915.4 594.1 915.6 595.1 913.0 596.9C910.4 598.7 904.6 600.4 902.2 602.3C899.8 604.2 900.6 605.5 898.6 608.3C896.6 611.1 893.1 616.0 890.1 619.2C887.1 622.4 883.9 624.6 880.5 627.6C877.1 630.6 873.8 634.4 870.0 637.0C866.2 639.6 862.2 640.3 857.8 643.0C853.3 645.7 849.4 650.0 843.3 653.0C837.1 656.0 828.1 658.9 820.9 661.3C813.7 663.7 806.0 665.9 800.0 667.5C794.0 669.1 791.1 668.9 785.1 670.8C779.1 672.7 772.5 677.7 764.2 678.9C755.9 680.1 741.6 677.1 735.2 677.9C728.8 678.7 730.4 682.2 725.6 683.7C720.8 685.2 712.7 686.6 706.3 686.6C699.9 686.6 693.2 684.5 687.1 683.7C681.0 682.9 676.8 682.9 669.7 681.8C662.6 680.7 651.0 678.3 644.7 676.9C638.4 675.5 636.8 674.1 631.8 673.2C626.8 672.3 620.0 672.3 614.9 671.5C609.8 670.7 604.8 669.3 601.4 668.2C598.0 667.1 598.1 667.0 594.7 664.8C591.3 662.5 586.3 657.5 581.2 654.7C576.1 651.9 569.9 650.0 564.3 647.9C558.7 645.8 550.9 643.4 547.5 642.0C544.1 640.6 546.6 641.3 544.1 639.5C541.6 637.7 535.7 633.6 532.3 631.1C528.9 628.6 526.2 626.5 523.8 624.3C521.4 622.0 519.3 619.9 517.9 617.6C516.5 615.4 516.1 613.2 515.4 610.8C514.7 608.4 515.1 604.9 513.7 603.2C512.3 601.5 508.7 603.1 507.0 600.7C505.3 598.3 505.0 592.8 503.6 588.9C502.2 585.0 500.1 581.0 498.5 577.1C496.9 573.2 495.4 569.4 494.3 565.3C493.2 561.2 491.1 552.0 491.8 552.6Z" fill="url(#gpl)"/>
<clipPath id="cpl"><path d="M491.8 552.6C492.5 553.2 496.0 563.5 498.5 568.7C501.0 573.9 504.0 579.4 507.0 583.8C510.0 588.1 512.4 592.4 516.3 594.8C520.2 597.2 525.0 598.3 530.6 598.2C536.2 598.1 546.8 594.7 550.0 594.0C548.7 595.4 544.4 599.6 542.4 602.4C540.4 605.2 538.8 608.0 538.2 610.8C537.6 613.6 538.0 616.8 539.0 619.3C540.0 621.8 541.3 623.5 544.1 626.0C546.9 628.5 551.4 631.9 555.9 634.4C560.4 636.9 565.8 639.8 571.1 641.2C576.4 642.6 584.7 641.8 587.9 642.9C591.1 644.0 590.1 647.1 590.5 647.9C591.5 648.5 592.3 649.9 596.4 651.3C600.5 652.7 609.0 655.2 614.9 656.4C620.8 657.6 627.3 658.3 631.8 658.5C636.3 658.7 640.1 657.8 641.8 657.6C642.3 659.0 640.1 663.4 644.7 666.3C649.4 669.2 663.0 673.5 669.7 675.0C676.4 676.5 682.5 675.0 685.1 675.0C685.4 675.5 683.6 676.9 687.1 677.9C690.6 678.9 699.9 681.3 706.3 680.8C712.7 680.3 720.8 676.9 725.6 675.0C730.4 673.1 733.6 670.2 735.2 669.2C740.0 669.7 756.2 673.2 764.2 672.1C772.2 671.0 780.0 664.6 783.4 662.5C786.8 660.4 784.2 660.1 784.4 659.6C787.0 659.4 794.0 660.1 800.0 658.5C806.0 656.9 816.8 651.5 820.2 650.1C820.3 649.4 817.5 648.2 821.0 646.0C824.5 643.8 834.9 639.4 841.4 636.6C847.9 633.8 855.7 631.1 860.0 629.0C864.3 626.9 864.2 626.5 867.2 624.0C870.2 621.5 875.2 617.5 878.1 614.3C881.0 611.1 883.6 606.3 884.7 604.7L885.3 597.5C887.1 597.1 892.7 596.9 896.1 595.1C899.5 593.3 903.0 590.2 905.8 586.6C908.6 583.0 910.8 576.4 913.0 573.4C915.2 570.4 916.8 570.8 919.0 568.6C921.2 566.4 924.7 563.1 926.3 560.1C927.9 557.1 928.6 553.5 928.7 550.5C928.8 547.5 928.1 544.2 926.9 542.0C925.7 539.8 922.3 538.0 921.4 537.2L932.3 529.5L932.3 569.8C931.5 571.6 929.9 577.0 927.5 580.6C925.1 584.2 920.2 588.7 917.8 591.4C915.4 594.1 915.6 595.1 913.0 596.9C910.4 598.7 904.6 600.4 902.2 602.3C899.8 604.2 900.6 605.5 898.6 608.3C896.6 611.1 893.1 616.0 890.1 619.2C887.1 622.4 883.9 624.6 880.5 627.6C877.1 630.6 873.8 634.4 870.0 637.0C866.2 639.6 862.2 640.3 857.8 643.0C853.3 645.7 849.4 650.0 843.3 653.0C837.1 656.0 828.1 658.9 820.9 661.3C813.7 663.7 806.0 665.9 800.0 667.5C794.0 669.1 791.1 668.9 785.1 670.8C779.1 672.7 772.5 677.7 764.2 678.9C755.9 680.1 741.6 677.1 735.2 677.9C728.8 678.7 730.4 682.2 725.6 683.7C720.8 685.2 712.7 686.6 706.3 686.6C699.9 686.6 693.2 684.5 687.1 683.7C681.0 682.9 676.8 682.9 669.7 681.8C662.6 680.7 651.0 678.3 644.7 676.9C638.4 675.5 636.8 674.1 631.8 673.2C626.8 672.3 620.0 672.3 614.9 671.5C609.8 670.7 604.8 669.3 601.4 668.2C598.0 667.1 598.1 667.0 594.7 664.8C591.3 662.5 586.3 657.5 581.2 654.7C576.1 651.9 569.9 650.0 564.3 647.9C558.7 645.8 550.9 643.4 547.5 642.0C544.1 640.6 546.6 641.3 544.1 639.5C541.6 637.7 535.7 633.6 532.3 631.1C528.9 628.6 526.2 626.5 523.8 624.3C521.4 622.0 519.3 619.9 517.9 617.6C516.5 615.4 516.1 613.2 515.4 610.8C514.7 608.4 515.1 604.9 513.7 603.2C512.3 601.5 508.7 603.1 507.0 600.7C505.3 598.3 505.0 592.8 503.6 588.9C502.2 585.0 500.1 581.0 498.5 577.1C496.9 573.2 495.4 569.4 494.3 565.3C493.2 561.2 491.1 552.0 491.8 552.6Z"/></clipPath><linearGradient id="p1" gradientUnits="userSpaceOnUse" x1="514" y1="0" x2="551" y2="0"><stop offset="0" stop-color="#6f5888"/><stop offset="1" stop-color="#b88be3"/></linearGradient>
<path clip-path="url(#cpl)" d="M510 588L556 588L538 611L531 606.5L518 604Z" fill="url(#p1)"/>
<path d="M541.2 318.0L585.1 344.2L585.1 352.4L542.1 325.8L499.6 363.6L494.2 359.6Z" fill="#886aa6"/>
<path d="M541.2 318.0L542.1 325.8L499.6 363.6L494.2 359.6Z" fill="#a078c6"/>
<path d="M470.5 369.0L473.4 375.0L498.7 388.5L482.4 403.0L481.5 403.9L475.2 384.0Z" fill="#7d6198"/>
<path d="M590.0 317.2C594.0 314.9 602.9 310.7 609.3 307.6C615.7 304.6 622.1 301.5 628.5 298.9C634.9 296.3 641.4 294.1 647.8 292.2C654.2 290.3 660.7 288.7 667.1 287.3C673.5 285.9 679.9 284.8 686.3 283.9C692.7 283.0 699.2 282.3 705.6 281.9C712.0 281.5 718.5 281.6 724.9 281.6C731.3 281.6 737.7 281.5 744.1 281.9C750.5 282.3 757.4 283.0 763.4 283.9C769.4 284.8 772.2 284.9 780.0 287.0C787.8 289.1 799.9 292.8 810.0 296.5C820.1 300.2 830.4 303.9 840.5 309.0C850.6 314.1 860.6 320.0 870.6 327.0C880.6 334.0 892.2 342.4 900.7 351.0C909.2 359.6 915.8 369.3 921.8 378.4C927.8 387.5 933.1 397.0 936.9 405.5C940.7 414.0 943.1 423.8 944.4 429.6C945.7 435.4 944.7 438.4 944.8 440.2C947.0 442.4 954.4 448.7 958.0 453.7C961.6 458.7 965.1 464.5 966.7 470.0C968.3 475.5 967.5 483.9 967.6 486.7C968.9 488.1 973.4 491.7 975.3 495.4C977.2 499.1 978.7 503.4 979.2 508.9C979.7 514.4 978.8 521.8 978.2 528.2C977.6 534.6 976.1 541.0 975.7 547.4C975.3 553.8 975.9 560.6 975.7 566.7C975.5 572.8 975.3 578.5 974.4 584.0C973.5 589.5 971.3 594.8 970.5 600.0C969.7 605.2 970.7 610.6 969.6 615.4C968.5 620.2 966.4 624.1 963.8 628.9C961.2 633.7 957.6 638.8 954.1 644.3C950.6 649.8 946.5 656.6 942.6 661.7C938.8 666.8 934.9 671.2 931.0 675.1C927.1 679.0 922.7 681.6 919.5 684.8C916.3 688.0 915.0 690.9 911.8 694.4C908.6 697.9 904.4 702.5 900.2 706.0C896.0 709.5 891.5 712.6 886.7 715.6C881.9 718.6 876.1 721.4 871.3 724.3C866.5 727.2 863.3 730.0 857.8 732.9C852.3 735.8 844.9 738.9 838.5 741.6C832.1 744.3 825.7 747.0 819.3 749.3C812.9 751.5 808.6 752.9 800.0 755.1C791.4 757.3 777.2 760.6 767.8 762.7C758.3 764.8 752.0 766.3 743.3 767.9C734.5 769.5 724.6 772.1 715.3 772.5C705.9 772.9 696.0 771.3 687.2 770.4C678.4 769.5 670.9 768.5 662.7 766.9C654.5 765.3 646.9 763.1 638.1 760.9C629.3 758.7 618.9 756.5 610.1 753.9C601.4 751.3 593.8 749.2 585.6 745.1C577.4 741.0 568.5 733.6 561.0 729.4C553.5 725.2 547.2 724.8 540.5 719.9C533.8 715.0 524.9 704.6 520.6 700.0C516.3 695.4 516.4 695.0 514.8 692.2C513.2 689.5 513.1 685.9 510.9 683.5C508.6 681.1 505.1 681.2 501.3 677.8C497.5 674.4 492.0 669.2 487.8 663.3C483.6 657.3 479.4 648.8 476.2 642.1C473.0 635.4 471.1 630.3 468.5 622.9C465.9 615.5 463.4 605.2 460.8 597.8C458.2 590.4 455.7 585.2 453.1 578.5C450.5 571.8 447.6 563.7 445.4 557.3C443.1 550.9 441.2 544.2 439.6 540.0C438.0 535.8 436.8 536.3 435.8 532.0C434.8 527.7 433.9 519.4 433.7 514.0C433.5 508.6 435.0 504.6 434.9 499.5C434.8 494.4 433.1 488.1 433.1 483.3C433.1 478.5 433.5 475.4 434.9 470.6C436.3 465.8 438.4 459.7 441.3 454.3C444.2 448.9 448.0 443.8 452.1 438.1C456.2 432.4 461.2 425.8 466.1 420.1C471.0 414.4 478.9 406.6 481.5 403.9C480.4 400.6 477.3 390.6 475.2 384.0C473.1 377.4 469.9 367.4 468.9 364.1L469.4 356.9C470.4 355.8 471.2 354.1 475.2 350.5C479.2 346.9 487.3 340.5 493.3 335.2C499.3 329.9 505.3 324.3 511.3 318.9C517.3 313.5 526.4 305.4 529.4 302.7C530.9 302.1 535.4 299.6 538.4 299.0C541.4 298.4 544.5 298.4 547.5 299.0C550.5 299.6 555.0 302.1 556.5 302.7C559.5 304.6 569.8 311.2 574.6 314.4C579.4 317.5 583.6 320.4 585.4 321.6C586.2 320.9 586.0 319.5 590.0 317.2Z" fill="none" stroke="#2f80fa" stroke-width="2.8" stroke-linejoin="round"/>
<g id="emboss"><defs><path id="tpA" d="M-49.47 1.73A49.5 49.5 0 0 0 -30.48 39.01"/><path id="tpB" d="M-25.49 42.43A49.5 49.5 0 0 0 15.30 47.08"/><path id="tpC" d="M17.74 46.21A49.5 49.5 0 0 0 49.43 2.59"/></defs>
<g transform="translate(1.3,1.6)"><g transform="matrix(4.318,0.7318,-1.141,3.619,716.4,476.3)"><text font-family="Liberation Sans, sans-serif" font-weight="bold" font-size="15" fill="#9873bb" stroke="#9873bb" stroke-width="1.8" stroke-linejoin="round" letter-spacing="0.6"><textPath href="#tpA">THE</textPath></text><text font-family="Liberation Sans, sans-serif" font-weight="bold" font-size="15" fill="#9873bb" stroke="#9873bb" stroke-width="1.8" stroke-linejoin="round" letter-spacing="0.6"><textPath href="#tpB">BOO</textPath></text><text font-family="Liberation Sans, sans-serif" font-weight="bold" font-size="15" fill="#9873bb" stroke="#9873bb" stroke-width="1.8" stroke-linejoin="round" letter-spacing="0.6"><textPath href="#tpC">CREW</textPath></text></g></g>
<g transform="matrix(4.318,0.7318,-1.141,3.619,716.4,476.3)"><text font-family="Liberation Sans, sans-serif" font-weight="bold" font-size="15" fill="#dc98fd" stroke="#dc98fd" stroke-width="1.8" stroke-linejoin="round" letter-spacing="0.6"><textPath href="#tpA">THE</textPath></text><text font-family="Liberation Sans, sans-serif" font-weight="bold" font-size="15" fill="#dc98fd" stroke="#dc98fd" stroke-width="1.8" stroke-linejoin="round" letter-spacing="0.6"><textPath href="#tpB">BOO</textPath></text><text font-family="Liberation Sans, sans-serif" font-weight="bold" font-size="15" fill="#dc98fd" stroke="#dc98fd" stroke-width="1.8" stroke-linejoin="round" letter-spacing="0.6"><textPath href="#tpC">CREW</textPath></text></g>
</g>
<g transform="matrix(4.318,0.7318,-1.141,3.619,716.4,476.3)"><defs><clipPath id="czz"><path clip-rule="evenodd" d="M-34.4 0A34.4 34.4 0 1 0 34.4 0A34.4 34.4 0 1 0 -34.4 0Z M-14.1 -22.7C-12 -28 -7 -31.5 -1.8 -31.7S8 -28 11.2 -22.6C13 -19 14.5 -12 15.3 -6.4S17 2 17.6 5.5S20 14 22 19C18 23 14 17 10 20S3 24 -2 19S-10 24 -14 19S-22 24 -26 19L-32 14C-27 12 -20 4 -18.3 0.4S-15 -16 -14.1 -22.7Z"/><path d="M-37.0 -3.9L-36.4 -7.7L-35.4 -11.5L-34.0 -15.1L-32.2 -18.6L-30.1 -21.9L-27.6 -24.9L-24.9 -27.6L-21.9 -30.1L-18.6 -32.2L-15.1 -34.0L-11.5 -35.4L-7.7 -36.4L-4.6 -32.7L-8.0 -32.0L-11.3 -31.0L-14.5 -29.7L-17.5 -28.0L-20.3 -26.0L-22.9 -23.7L-25.3 -21.2L-27.4 -18.5L-29.1 -15.5L-30.6 -12.4L-31.7 -9.1L-32.5 -5.7Z"/></clipPath></defs><g clip-path="url(#czz)"><path d="M-48.6 -87.1V-93.6H-42.1V-100.1H-35.6V-106.6H-29.1V-113.1H-22.6V-119.6H-16.1V-126.1H-9.6V-132.6H-3.1V-139.1H3.4V-145.6H9.9V-152.1H16.4V-158.6H22.9V-165.1H29.4V-171.6H35.9V-178.1H42.4V-184.6H48.9M-48.6 -74.1V-80.6H-42.1V-87.1H-35.6V-93.6H-29.1V-100.1H-22.6V-106.6H-16.1V-113.1H-9.6V-119.6H-3.1V-126.1H3.4V-132.6H9.9V-139.1H16.4V-145.6H22.9V-152.1H29.4V-158.6H35.9V-165.1H42.4V-171.6H48.9M-48.6 -61.1V-67.6H-42.1V-74.1H-35.6V-80.6H-29.1V-87.1H-22.6V-93.6H-16.1V-100.1H-9.6V-106.6H-3.1V-113.1H3.4V-119.6H9.9V-126.1H16.4V-132.6H22.9V-139.1H29.4V-145.6H35.9V-152.1H42.4V-158.6H48.9M-48.6 -48.1V-54.6H-42.1V-61.1H-35.6V-67.6H-29.1V-74.1H-22.6V-80.6H-16.1V-87.1H-9.6V-93.6H-3.1V-100.1H3.4V-106.6H9.9V-113.1H16.4V-119.6H22.9V-126.1H29.4V-132.6H35.9V-139.1H42.4V-145.6H48.9M-48.6 -35.1V-41.6H-42.1V-48.1H-35.6V-54.6H-29.1V-61.1H-22.6V-67.6H-16.1V-74.1H-9.6V-80.6H-3.1V-87.1H3.4V-93.6H9.9V-100.1H16.4V-106.6H22.9V-113.1H29.4V-119.6H35.9V-126.1H42.4V-132.6H48.9M-48.6 -22.1V-28.6H-42.1V-35.1H-35.6V-41.6H-29.1V-48.1H-22.6V-54.6H-16.1V-61.1H-9.6V-67.6H-3.1V-74.1H3.4V-80.6H9.9V-87.1H16.4V-93.6H22.9V-100.1H29.4V-106.6H35.9V-113.1H42.4V-119.6H48.9M-48.6 -9.1V-15.6H-42.1V-22.1H-35.6V-28.6H-29.1V-35.1H-22.6V-41.6H-16.1V-48.1H-9.6V-54.6H-3.1V-61.1H3.4V-67.6H9.9V-74.1H16.4V-80.6H22.9V-87.1H29.4V-93.6H35.9V-100.1H42.4V-106.6H48.9M-48.6 3.9V-2.6H-42.1V-9.1H-35.6V-15.6H-29.1V-22.1H-22.6V-28.6H-16.1V-35.1H-9.6V-41.6H-3.1V-48.1H3.4V-54.6H9.9V-61.1H16.4V-67.6H22.9V-74.1H29.4V-80.6H35.9V-87.1H42.4V-93.6H48.9M-48.6 16.9V10.4H-42.1V3.9H-35.6V-2.6H-29.1V-9.1H-22.6V-15.6H-16.1V-22.1H-9.6V-28.6H-3.1V-35.1H3.4V-41.6H9.9V-48.1H16.4V-54.6H22.9V-61.1H29.4V-67.6H35.9V-74.1H42.4V-80.6H48.9M-48.6 29.9V23.4H-42.1V16.9H-35.6V10.4H-29.1V3.9H-22.6V-2.6H-16.1V-9.1H-9.6V-15.6H-3.1V-22.1H3.4V-28.6H9.9V-35.1H16.4V-41.6H22.9V-48.1H29.4V-54.6H35.9V-61.1H42.4V-67.6H48.9M-48.6 42.9V36.4H-42.1V29.9H-35.6V23.4H-29.1V16.9H-22.6V10.4H-16.1V3.9H-9.6V-2.6H-3.1V-9.1H3.4V-15.6H9.9V-22.1H16.4V-28.6H22.9V-35.1H29.4V-41.6H35.9V-48.1H42.4V-54.6H48.9M-48.6 55.9V49.4H-42.1V42.9H-35.6V36.4H-29.1V29.9H-22.6V23.4H-16.1V16.9H-9.6V10.4H-3.1V3.9H3.4V-2.6H9.9V-9.1H16.4V-15.6H22.9V-22.1H29.4V-28.6H35.9V-35.1H42.4V-41.6H48.9M-48.6 68.9V62.4H-42.1V55.9H-35.6V49.4H-29.1V42.9H-22.6V36.4H-16.1V29.9H-9.6V23.4H-3.1V16.9H3.4V10.4H9.9V3.9H16.4V-2.6H22.9V-9.1H29.4V-15.6H35.9V-22.1H42.4V-28.6H48.9M-48.6 81.9V75.4H-42.1V68.9H-35.6V62.4H-29.1V55.9H-22.6V49.4H-16.1V42.9H-9.6V36.4H-3.1V29.9H3.4V23.4H9.9V16.9H16.4V10.4H22.9V3.9H29.4V-2.6H35.9V-9.1H42.4V-15.6H48.9M-48.6 94.9V88.4H-42.1V81.9H-35.6V75.4H-29.1V68.9H-22.6V62.4H-16.1V55.9H-9.6V49.4H-3.1V42.9H3.4V36.4H9.9V29.9H16.4V23.4H22.9V16.9H29.4V10.4H35.9V3.9H42.4V-2.6H48.9M-48.6 107.9V101.4H-42.1V94.9H-35.6V88.4H-29.1V81.9H-22.6V75.4H-16.1V68.9H-9.6V62.4H-3.1V55.9H3.4V49.4H9.9V42.9H16.4V36.4H22.9V29.9H29.4V23.4H35.9V16.9H42.4V10.4H48.9M-48.6 120.9V114.4H-42.1V107.9H-35.6V101.4H-29.1V94.9H-22.6V88.4H-16.1V81.9H-9.6V75.4H-3.1V68.9H3.4V62.4H9.9V55.9H16.4V49.4H22.9V42.9H29.4V36.4H35.9V29.9H42.4V23.4H48.9" fill="none" stroke="#9471b7" stroke-width="1.25" vector-effect="non-scaling-stroke" stroke-linejoin="round"/></g><path d="M22 19C18 23 14 17 10 20S3 24 -2 19S-10 24 -14 19S-22 24 -26 19L-32 14" fill="none" stroke="#9471b7" stroke-width="1.25" vector-effect="non-scaling-stroke"/></g>
<g id="details" fill="none" stroke="#906eb3" stroke-width="1.4" stroke-linecap="round" stroke-linejoin="round">
<!-- big circle -->
<path d="M565.1 519C569 530 576.3 542.6 596.5 565S640 590 654.7 596.3S690 603.5 710 604.1S765 594 789.6 584S835 556 845.6 544.8S864 512 868 500"/>
<path d="M866.9 442C872 455 875 470 873.6 475.6S870 500 866.9 509" stroke-dasharray="5 3"/>
<path d="M700 349L711 348M724.6 346.8L740 349M740.5 351L767 355.8M769.4 352.4L783 355.8"/>
<!-- ghost -->
<path d="M700 377C708 369 722.4 361 744.8 360.2S776 376 782.9 386S789 398 790.7 402.8"/>
<path d="M790.7 402.8C795 412 795.2 421.8 794 440S789.6 464.4 787 509" stroke-dasharray="6 4"/>
<path d="M705.6 402.8C711 405.5 717.9 403.9 723 399S731 391 731.4 387.1"/>
<path d="M748.2 399.4C750 405 753 412 758.2 412.9S766 408 767.2 403.9"/>
<path d="M602.1 500.2C615 488 636.8 464.4 659.2 428.5S678 394 681.6 383.8"/>
<path d="M659.2 509.2C668 495 681.6 464.4 691.7 444.2"/>
<!-- sparkles / THE strokes -->
<path d="M531.5 428.5L539.3 435.3M541.6 442L547.2 435.3L560.6 434.1M506.9 453.2L511.4 455.4M513.6 462.1L518.1 456.5L524.8 456.5"/>
<path d="M880.3 488C886 491 889 496 892 503M892 503C896 496 902 494 909.5 493.5"/>
</g>

<g id="gizmo">
<path d="M706.2 498L697 411" stroke="#196ef0" stroke-width="2"/>
<path d="M719 512.8L883 540.8" stroke="#da1e28" stroke-width="2"/>
<path d="M704.2 521L661 661" stroke="#22a047" stroke-width="2"/>
<path d="M684.4 381.8L704.6 384.6L706 396.2L701.8 412.6L682.1 409.7L679.6 397.2Z" fill="#196ef0"/>
<path d="M648.5 660.2L667.8 662.5L669.7 672.1L665.9 689.5L645.6 686.6L644.3 675Z" fill="#22a047"/>
<path d="M885.9 528L903.8 530.2L904.3 536L900.4 556L881.4 553.8L883.2 536Z" fill="#da1e28"/>
<path d="M700.8 496.1L718.9 499.1L719.7 503.7L716 524.8L697 521.4L696.1 512.2Z" fill="#ffffff"/>
</g>

</svg>
<div class="abs stl">
<svg width="91" height="97" viewBox="0 0 91 97">
<path d="M12.2 -2H53L81.8 26.8V88.5Q81.8 93 77.3 93H11.7Q7.2 93 7.2 88.5V3Q7.2 -2 12.2 -2Z" fill="#3f45c8"/>
<path d="M54 -3V22.5Q54 28.7 60.2 28.7H83" fill="none" stroke="#fff" stroke-width="4.9"/>
<rect x="-6" y="8.8" width="47.3" height="33.5" rx="5.5" fill="#fff"/>
<rect x="-6" y="13.6" width="43" height="24.4" rx="3" fill="#3f45c8"/>
<text x="1.2" y="31.2" font-family="Liberation Sans, sans-serif" font-weight="bold" font-size="13.4" fill="#fff" textLength="24" lengthAdjust="spacingAndGlyphs">STL</text>
<rect x="19.9" y="46.7" width="49.2" height="4.7" fill="#fff"/>
<rect x="19.9" y="61.6" width="49.2" height="4.7" fill="#fff"/>
<rect x="19.9" y="75.9" width="49.2" height="4.7" fill="#fff"/>
</svg>
</div>
<div class="abs panel"></div>
<svg class="abs arrow" style="left:-1px" width="14" height="28" viewBox="0 0 14 28"><path d="M13.5 1L0.7 14L13.5 27" fill="#fff" stroke="#c0c1c2" stroke-width="1"/><rect x="12.5" y="1.6" width="1.5" height="24.8" fill="#fff"/></svg>
<div class="abs lbl" style="top:260px;color:#da1e28">X</div>
<div class="abs lbl" style="top:301px;color:#24a20d">Y</div>
<div class="abs lbl" style="top:343px;color:#196ef0">Z</div>
<div class="abs fld hov" style="left:46px;top:260px"><span class="v">115.6669</span><span class="u">mm</span></div>
<div class="abs fld hov" style="left:233px;top:260px"><span class="v">100</span><span class="u">%</span></div>
<div class="abs fld" style="left:46px;top:301px;height:32px"><span class="v">106.2145</span><span class="u">mm</span></div>
<div class="abs fld" style="left:233px;top:301px;height:32px"><span class="v">100</span><span class="u">%</span></div>
<div class="abs fld" style="left:46px;top:343px"><span class="v">26</span><span class="u">mm</span></div>
<div class="abs fld" style="left:233px;top:343px"><span class="v">100</span><span class="u">%</span></div>
<svg class="abs" style="left:62px;top:410px" width="30" height="32" viewBox="0 0 30 32"><g fill="none" stroke="#08073f" stroke-width="2.6" stroke-linecap="round" stroke-linejoin="round"><path d="M6.3 7.3H15.4A9.6 9.6 0 1 1 5.85 17.6"/><path d="M12 2.2L6.3 7.3L12 12.5"/></g></svg>
<div class="abs cb" style="top:395px"></div>
<div class="abs cbl" style="top:396px">Snap Scaling</div>
<div class="abs cb" style="top:432px"></div>
<div class="abs cbl" style="top:433px;letter-spacing:0.22px">Uniform Scaling</div>
<svg class="abs" style="left:12px;top:682px" width="16" height="12" viewBox="0 0 16 12"><path d="M2.5 9.5L8 4L13.5 9.5" fill="none" stroke="#666" stroke-width="1.4"/></svg>
<div class="abs ol" style="left:45.5px;top:681px;line-height:18px">Object list</div>
<svg class="abs" style="left:13px;top:716px" width="22" height="22" viewBox="0 0 22 22"><path d="M6.6 13.7L18.1 4.4" stroke="#666" stroke-width="3.3" fill="none"/><rect x="2.3" y="17.4" width="17.2" height="1.7" fill="#666"/></svg>
<div class="abs ol" style="left:53.5px;top:718px;line-height:18px;letter-spacing:-0.4px">STL1448</div>
<div class="abs ol" style="left:12.8px;top:751px;line-height:18px">115.7 x 106.2 x 26.0 mm</div>
<svg class="abs" style="left:12px;top:786.4px" width="200" height="34" viewBox="0 0 200 34"><g fill="none" stroke="#666" stroke-width="2.4" stroke-linejoin="round"><path d="M16.9 4.6L27.8 10.5V22.9L16.9 28.9L6.2 22.9V10.5ZM6.2 10.5L16.9 16.5L27.8 10.5M16.9 16.5V28.9"/><path d="M45.7 11.6L61.3 11.6L61.3 27.2L45.7 27.2Z" fill="#666"/><path d="M45.7 11.6L51.7 6.0L67.3 6.0L61.3 11.6Z" fill="none"/><path d="M61.3 11.6L67.3 6.0L67.3 21.6L61.3 27.2Z" fill="none"/><path d="M85.7 11.6L101.3 11.6L101.3 27.2L85.7 27.2Z" fill="none"/><path d="M85.7 11.6L91.7 6.0L107.3 6.0L101.3 11.6Z" fill="#666"/><path d="M101.3 11.6L107.3 6.0L107.3 21.6L101.3 27.2Z" fill="none"/><path d="M131.5 11.6L147.1 11.6L147.1 27.2L131.5 27.2Z" fill="none"/><path d="M131.5 11.6L125.5 6.0L141.1 6.0L147.1 11.6Z" fill="none"/><path d="M131.5 11.6L125.5 6.0L125.5 21.6L131.5 27.2Z" fill="#666"/><path d="M165.7 11.6L181.3 11.6L181.3 27.2L165.7 27.2Z" fill="none"/><path d="M165.7 11.6L171.7 6.0L187.3 6.0L181.3 11.6Z" fill="none"/><path d="M181.3 11.6L187.3 6.0L187.3 21.6L181.3 27.2Z" fill="#666"/></g></svg>

</body></html>
